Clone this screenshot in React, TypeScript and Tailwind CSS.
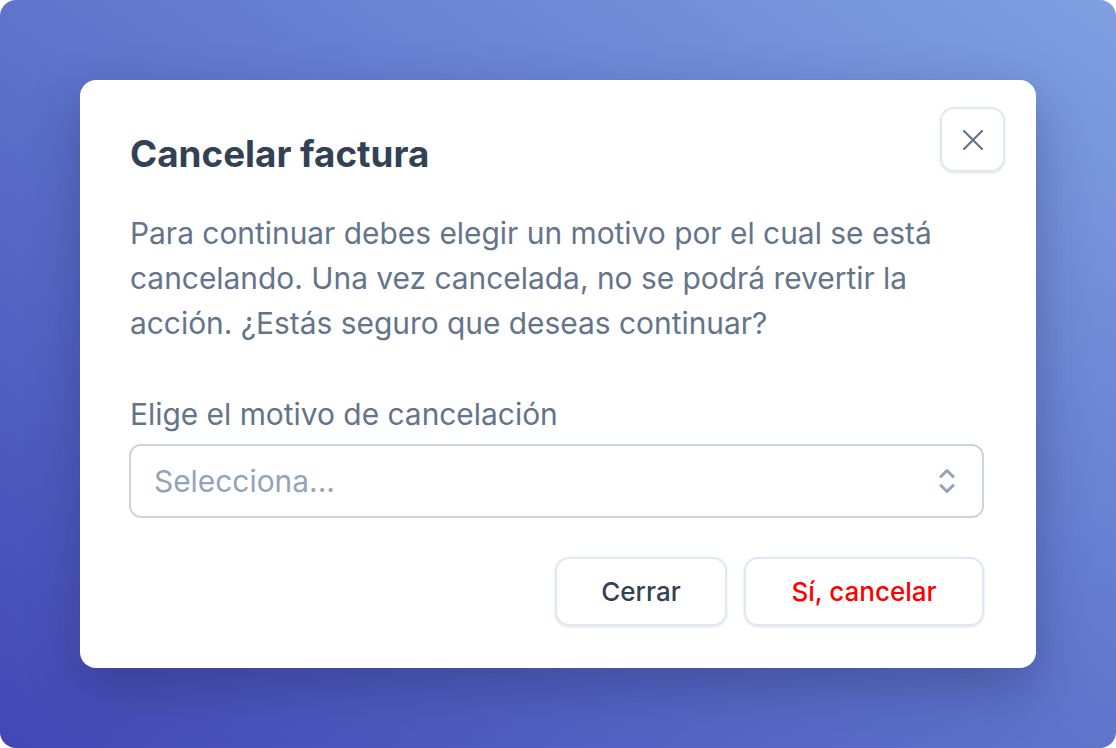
import { useState } from 'react';

function CloseIcon() {
  return (
    <svg width="20" height="20" viewBox="0 0 20 20" fill="none" stroke="currentColor" strokeWidth="2.2" strokeLinecap="round">
      <path d="M1 1 L19 19 M19 1 L1 19" />
    </svg>
  );
}

function UpDownIcon() {
  return (
    <svg width="16" height="26" viewBox="0 0 16 26" fill="none" stroke="currentColor" strokeWidth="3" strokeLinecap="round" strokeLinejoin="round">
      <path d="M2 8.5 L8 2.5 L14 8.5" />
      <path d="M2 17.5 L8 23.5 L14 17.5" />
    </svg>
  );
}

export default function App() {
  const [motivo, setMotivo] = useState('');

  return (
    <div
      className="w-full h-[748px] rounded-[16px] bg-gradient-to-tr from-[#4347b4] to-[#80a0e1] flex items-start justify-center pt-[80px]"
      style={{ fontFamily: 'Inter, "Noto Sans", sans-serif' }}
    >
      <div className="relative w-[956px] h-[588px] bg-white rounded-[16px] shadow-[0_20px_50px_rgba(30,35,90,0.35)] pl-[49px] pr-[52px] pt-[52px]">
        {/* cerrar */}
        <button className="absolute top-[27px] right-[31px] w-[65px] h-[65px] rounded-[14px] border-2 border-[#e2e8f0] shadow-sm flex items-center justify-center text-[#64748b]">
          <CloseIcon />
        </button>

        <h2 className="text-[36.8px] leading-[44px] font-bold text-[#334155] pl-px">Cancelar factura</h2>

        <p className="mt-[35px] text-[29.9px] leading-[45px] text-[#64748b] pl-px">
          Para continuar debes elegir un motivo por el cual se está cancelando. Una vez cancelada, no se podrá revertir la
          acción. ¿Estás seguro que deseas continuar?
        </p>

        <label className="block mt-[47px] text-[29.9px] leading-[42px] text-[#64748b] pl-px">Elige el motivo de cancelación</label>

        <div className="mt-[9px] h-[74px] rounded-[12px] border-2 border-[#cbd5e1] flex items-center justify-between pl-[23px] pr-[27px]">
          <span className={`text-[29.9px] ${motivo ? 'text-[#334155]' : 'text-[#94a3b8]'}`} onClick={() => setMotivo('')}>
            {motivo || 'Selecciona...'}
          </span>
          <span className="text-[#94a3b8]">
            <UpDownIcon />
          </span>
        </div>

        <div className="mt-[39px] flex justify-end gap-[17px]">
          <button className="w-[172px] h-[69px] rounded-[14px] border-2 border-[#e2e8f0] shadow-sm text-[26px] font-medium text-[#334155]">
            Cerrar
          </button>
          <button className="w-[240px] h-[69px] rounded-[14px] border-2 border-[#e2e8f0] shadow-sm text-[26px] font-medium text-[#ff0000]">
            Sí, cancelar
          </button>
        </div>
      </div>
    </div>
  );
}
